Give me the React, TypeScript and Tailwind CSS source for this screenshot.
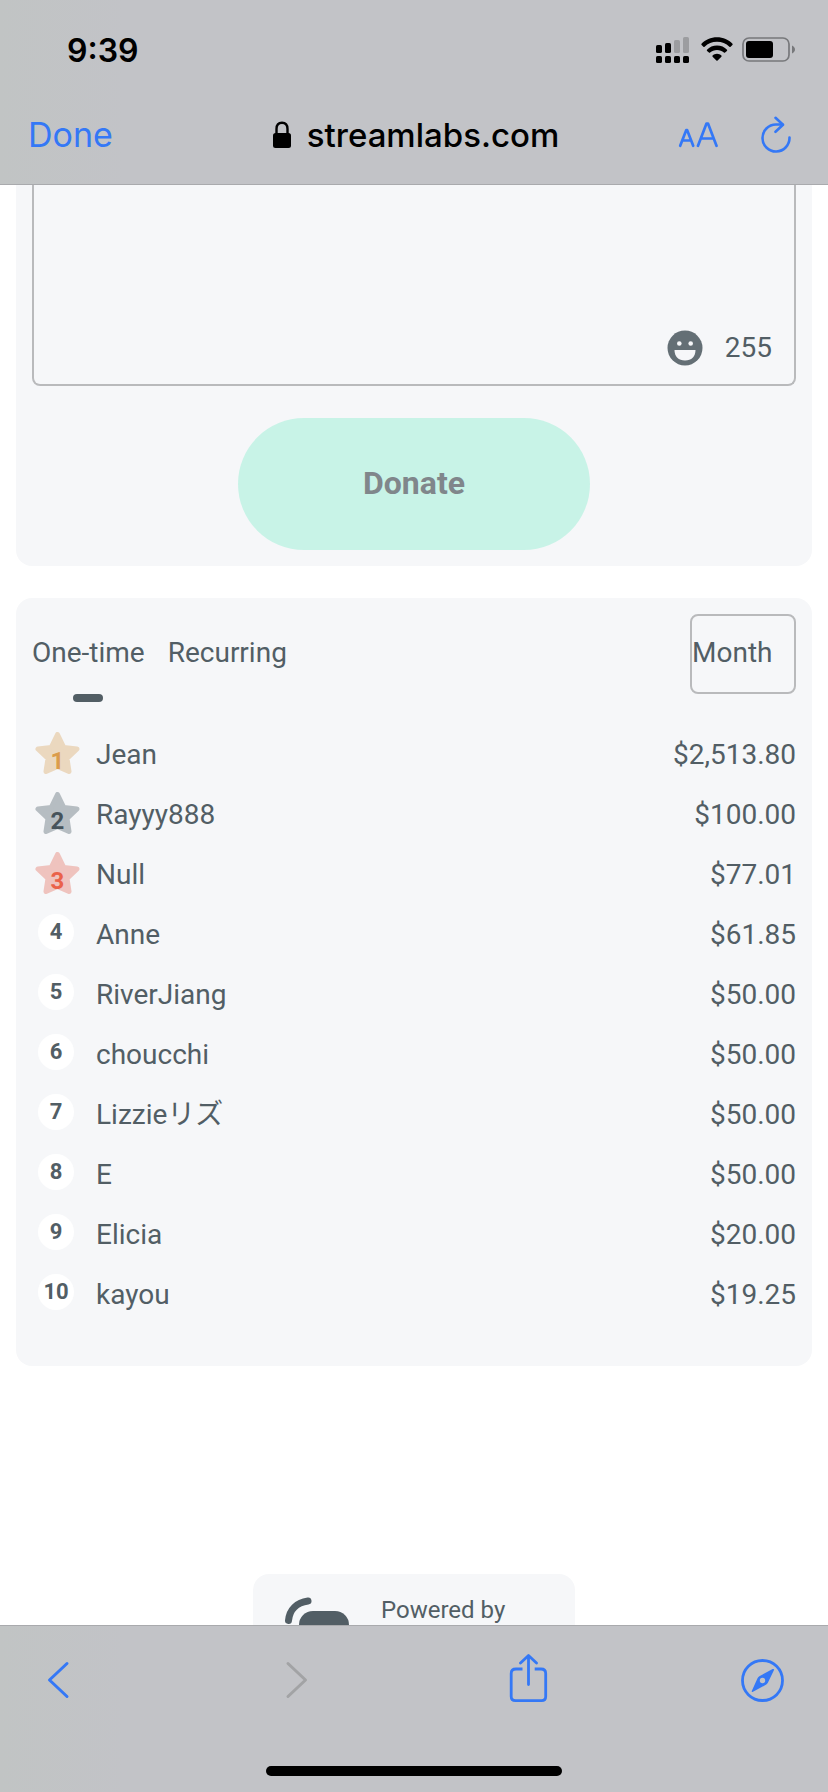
import React from "react";

type Donor = { rank: number; name: string; amount: string };

const donors: Donor[] = [
  { rank: 1, name: "Jean", amount: "$2,513.80" },
  { rank: 2, name: "Rayyy888", amount: "$100.00" },
  { rank: 3, name: "Null", amount: "$77.01" },
  { rank: 4, name: "Anne", amount: "$61.85" },
  { rank: 5, name: "RiverJiang", amount: "$50.00" },
  { rank: 6, name: "choucchi", amount: "$50.00" },
  { rank: 7, name: "Lizzieリズ", amount: "$50.00" },
  { rank: 8, name: "E", amount: "$50.00" },
  { rank: 9, name: "Elicia", amount: "$20.00" },
  { rank: 10, name: "kayou", amount: "$19.25" },
];

const starStyles: Record<number, string> = {
  1: "fill-[#ebd8bf] stroke-[#ebd8bf] text-[#db9c4c]",
  2: "fill-[#b6bdc2] stroke-[#b6bdc2] text-[#46535b]",
  3: "fill-[#efc3be] stroke-[#efc3be] text-[#ea624a]",
};

function Signal() {
  return (
    <svg className="h-[26px] w-[34px]" viewBox="0 0 34 26" aria-hidden="true">
      <rect x="0" y="8" width="6" height="8" rx="1.6" />
      <rect x="9" y="6" width="6" height="10" rx="1.6" />
      <rect x="18" y="3" width="6" height="13" rx="1.6" fill="#9c9da0" />
      <rect x="27" y="0" width="6" height="16" rx="1.6" fill="#9c9da0" />
      <rect x="0" y="19" width="6" height="7" rx="1.6" />
      <rect x="9" y="19" width="6" height="7" rx="1.6" />
      <rect x="18" y="19" width="6" height="7" rx="1.6" />
      <rect x="27" y="19" width="6" height="7" rx="1.6" />
    </svg>
  );
}

function Wifi() {
  return (
    <svg className="h-[26px] w-[32px]" viewBox="0 0 32 26" aria-hidden="true">
      <path d="M16 0.3C22.2 0.3 27.7 2.8 31.5 6.8Q32 7.4 31.4 8L29.6 9.7Q29 10.2 28.4 9.7C25.100 6.500 20.800 4.700 16 4.700S6.900 6.500 3.600 9.700Q3 10.200 2.400 9.700L0.600 8Q0 7.400 0.500 6.800C4.300 2.800 9.800 0.300 16 0.300Z" />
      <path d="M16 8.600C20 8.600 23.500 10.200 26 12.700Q26.500 13.300 25.900 13.900L24.100 15.600Q23.500 16.100 22.900 15.600C21.100 13.900 18.700 12.900 16 12.900S10.900 13.900 9.100 15.600Q8.500 16.100 7.900 15.600L6.100 13.900Q5.500 13.300 6 12.700C8.500 10.200 12 8.600 16 8.600Z" />
      <path d="M16 16.800C17.700 16.800 19.300 17.500 20.400 18.600Q20.900 19.200 20.400 19.700L16.600 23.500Q16 24 15.400 23.500L11.600 19.700Q11.100 19.200 11.600 18.600C12.700 17.500 14.300 16.800 16 16.800Z" />
    </svg>
  );
}

function Battery() {
  return (
    <svg className="h-[26px] w-[54px]" viewBox="0 0 54 26" aria-hidden="true">
      <rect x="1" y="1" width="46" height="23" rx="6" fill="none" stroke="#77787b" strokeWidth="1.700" />
      <rect x="4" y="4" width="27" height="17" rx="3" />
      <path d="M50 8.500C51.800 9.300 53 10.800 53 12.500S51.800 15.700 50 16.500Z" fill="#77787b" />
    </svg>
  );
}

function StarBadge({ rank }: { rank: number }) {
  return (
    <span className={"mb-[2px] grid h-[42px] w-[45px] place-items-center " + starStyles[rank]}>
      <svg className="col-start-1 row-start-1 h-[42px] w-[45px]" viewBox="0 0 45 42" aria-hidden="true">
        <path
          d="M22.500 2.500L28.800 15.500L42 17L32 26.500L34 39.500L22.500 34.500L11 39.500L13 26.500L3 17L16.200 15.500Z"
          strokeWidth="5"
          strokeLinejoin="round"
        />
      </svg>
      <span className="col-start-1 row-start-1 pt-4 text-2xl leading-6 font-bold">{rank}</span>
    </span>
  );
}

function CircleBadge({ rank }: { rank: number }) {
  return (
    <span className="mb-1 ml-[3px] flex size-9 items-center justify-center rounded-full bg-white text-[22px] leading-6 font-bold">
      {rank}
    </span>
  );
}

export default function App() {
  return (
    <div className="flex h-screen flex-col overflow-hidden bg-white font-[Roboto,'Noto_Sans_CJK_JP',sans-serif] text-[28px] leading-10 text-[#525e65]">
      <header className="shrink-0 border-b border-[#a9aaad] bg-linear-to-r from-[#c1c4c4] to-[#c2c3c7] to-15% font-[Inter,sans-serif] text-black">
        <div className="flex h-[88px] items-center justify-between pt-3 pr-8 pl-[67px]">
          <time className="pt-[2px] text-[32px] font-semibold">9:39</time>
          <div className="flex items-center gap-[11px]">
            <Signal />
            <Wifi />
            <span className="-ml-[2px]">
              <Battery />
            </span>
          </div>
        </div>
        <div className="grid h-24 grid-cols-[1fr_auto_1fr] items-center pr-6 pb-[2px] pl-7 text-[34px] text-[#3478f6]">
          <button type="button" className="justify-self-start">
            Done
          </button>
          <div className="flex items-center gap-4 text-[33px] font-medium text-black">
            <svg className="h-7 w-[18px]" viewBox="0 0 18 28" aria-hidden="true">
              <rect x="0" y="12" width="18" height="15" rx="2.500" />
              <path d="M3.500 13V8C3.500 4 5.700 1.700 9 1.700S14.500 4 14.500 8V13" fill="none" stroke="#000" strokeWidth="2.400" />
            </svg>
            <span>streamlabs.com</span>
          </div>
          <div className="flex items-center gap-[42px] justify-self-end pr-3">
            <button type="button" aria-label="Text size">
              <svg className="h-9 w-10" viewBox="0 0 40 36" fill="none" stroke="currentColor" strokeWidth="2.700" strokeLinecap="round" strokeLinejoin="round" aria-hidden="true">
                <path d="M2.200 28.800L8.200 13.200H9.200L15.200 28.800M4.500 23.500H13" />
                <path d="M20 28.800L28.500 6.500H30L38.500 28.800M23 21.500H35.500" />
              </svg>
            </button>
            <button type="button" aria-label="Reload">
              <svg className="h-[38px] w-8" viewBox="0 0 32 38" fill="none" stroke="currentColor" strokeWidth="2.600" strokeLinecap="round" strokeLinejoin="round" aria-hidden="true">
                <path d="M29.500 21.500A13.500 13.500 0 1 1 16 8.500H22.500" />
                <path d="M15.500 1.800L23 8.800L15.500 15.800" />
              </svg>
            </button>
          </div>
        </div>
      </header>

      <main className="min-h-0 flex-1 overflow-hidden px-4">
        <section className="rounded-b-2xl bg-[#f6f7f9] px-4 pb-4">
          <div className="relative">
            <textarea
              aria-label="Message"
              maxLength={255}
              className="block h-[201px] w-full resize-none rounded-b-lg border-2 border-t-0 border-[#b9babc] px-4 outline-none"
            />
            <div className="absolute right-6 bottom-[18px] flex items-center gap-[22px]">
              <button type="button" aria-label="Insert emoji">
                <svg className="size-9" viewBox="0 0 36 36" aria-hidden="true">
                  <circle cx="18" cy="18" r="17.500" fill="#646f75" />
                  <circle cx="12.300" cy="13.500" r="2.300" fill="#f6f7f9" />
                  <circle cx="23.700" cy="13.500" r="2.300" fill="#f6f7f9" />
                  <path d="M7.500 20H28.500C28.500 26.500 24.500 30.500 18 30.500S7.500 26.500 7.500 20Z" fill="#f6f7f9" />
                </svg>
              </button>
              <span>255</span>
            </div>
          </div>
          <button
            type="button"
            disabled
            className="mx-auto mt-8 flex h-[132px] w-[352px] items-center justify-center rounded-full bg-[#c8f3e7] pb-[2px] text-[32px] font-bold text-[#80868b]"
          >
            Donate
          </button>
        </section>

        <section className="mt-8 rounded-2xl bg-[#f6f7f9] px-4 pt-4 pb-[42px]">
          <div className="flex items-start justify-between">
            <div role="tablist" className="flex items-start gap-[23px] pt-[19px]">
              <button type="button" role="tab" aria-selected="true" className="flex flex-col items-center gap-[21px]">
                One-time
                <span className="h-2 w-[30px] rounded-full bg-[#525e65]" />
              </button>
              <button type="button" role="tab" aria-selected="false">
                Recurring
              </button>
            </div>
            <select
              aria-label="Period"
              className="h-20 w-[106px] appearance-none rounded-lg border-2 border-[#b9babc] pb-[2px]"
            >
              <option>Month</option>
            </select>
          </div>
          <table className="mt-[22px] w-full">
            <tbody>
              {donors.map((d) => (
                <tr key={d.rank} className="h-[60px]">
                  <td className="w-16 pl-[3px]">
                    {d.rank <= 3 ? <StarBadge rank={d.rank} /> : <CircleBadge rank={d.rank} />}
                  </td>
                  <td className="pt-[2px]">{d.name}</td>
                  <td className="pt-[2px] text-right">{d.amount}</td>
                </tr>
              ))}
            </tbody>
          </table>
        </section>

        <a href="#" className="mx-auto mt-[208px] flex h-32 w-[322px] items-start gap-8 rounded-2xl bg-[#f6f7f9] px-8 pt-[22px] text-2xl leading-7">
          <svg className="h-16 w-16 shrink-0" viewBox="0 0 64 64" aria-hidden="true">
            <path d="M3.500 24.500C4.500 13.500 12 6.500 23 5" fill="none" stroke="#525e65" strokeWidth="7" strokeLinecap="round" />
            <rect x="14" y="15" width="50" height="46" rx="14" fill="#525e65" />
          </svg>
          <span>Powered by</span>
        </a>
      </main>

      <footer className="relative z-10 shrink-0 border-t border-[#a9aaad] bg-linear-to-r from-[#c1c4c4] to-[#c2c3c7] to-15% pb-4">
        <nav className="flex justify-between pt-7 pr-11 pl-9 text-[#3478f6]">
          <button type="button" aria-label="Back">
            <svg className="h-[52px] w-11" viewBox="0 0 44 52" fill="none" stroke="currentColor" strokeWidth="3" strokeLinecap="round" strokeLinejoin="round" aria-hidden="true">
              <path d="M31 9.500L13.500 26L31 42.500" />
            </svg>
          </button>
          <button type="button" aria-label="Forward" disabled className="text-[#a2a3a5]">
            <svg className="h-[52px] w-11" viewBox="0 0 44 52" fill="none" stroke="currentColor" strokeWidth="3" strokeLinecap="round" strokeLinejoin="round" aria-hidden="true">
              <path d="M17 9.500L34.500 26L17 42.500" />
            </svg>
          </button>
          <button type="button" aria-label="Share">
            <svg className="h-[52px] w-11" viewBox="0 0 44 52" fill="none" stroke="currentColor" strokeWidth="2.800" strokeLinejoin="round" aria-hidden="true">
              <path d="M17.500 15H11Q6.200 15 6.200 19.500V42.500Q6.200 46.700 10.500 46.700H36.500Q40.700 46.700 40.700 42.500V19.500Q40.700 15 36 15H29.700" />
              <path d="M23.500 30.500V1.700M15.500 9L23.500 1.500L31.500 9" strokeLinecap="round" />
            </svg>
          </button>
          <button type="button" aria-label="Bookmarks">
            <svg className="h-[52px] w-11" viewBox="0 0 44 52" aria-hidden="true">
              <circle cx="22.500" cy="26.500" r="20" fill="none" stroke="currentColor" strokeWidth="2.800" />
              <path
                d="M32.600 15.100Q34.600 14.400 33.900 16.300L28 28.500Q27.500 29.700 26.300 30.600L13 37.800Q11.200 38.500 12 36.500L17.400 24.500Q18 23.100 19.300 22.300ZM22.500 23.800A2.700 2.700 0 1 0 22.500 29.200A2.700 2.700 0 1 0 22.500 23.800Z"
                fill="currentColor"
                fillRule="evenodd"
              />
            </svg>
          </button>
        </nav>
        <div className="mx-auto mt-[60px] h-[10px] w-[296px] rounded-full bg-black" />
      </footer>
    </div>
  );
}
